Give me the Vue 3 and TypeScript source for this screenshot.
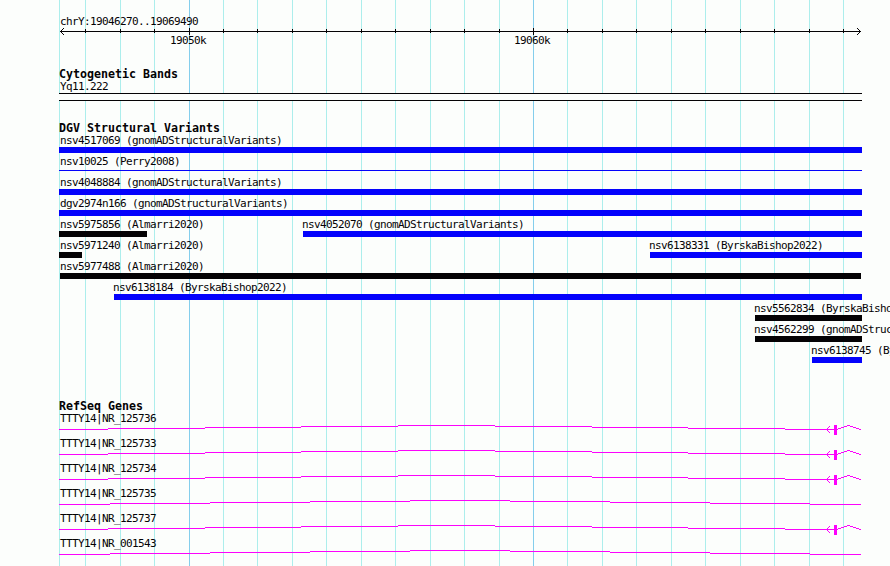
<script setup lang="ts">
interface Feature {
  name: string
  start: number
  end: number
  labelX: number
  color: 'blue' | 'black'
  thin?: boolean
}
interface Gene {
  name: string
  spliced: boolean
}
interface Segment {
  x: number
  w: number
  y: number
}

const gridLines: number[] = [
  59, 85, 120, 154, 189, 223, 257, 292, 326, 361, 395, 430,
  464, 499, 533, 567, 602, 636, 671, 705, 740, 774, 809, 843,
]
const major: Record<number, string> = { 189: '19050k', 533: '19060k' }
const ticks = gridLines.slice(1)

const f = (
  name: string, start: number, end: number, labelX: number,
  color: 'blue' | 'black' = 'blue', thin = false,
): Feature => ({ name, start, end, labelX, color, thin })

const variantRows: Feature[][] = [
  [f('nsv4517069 (gnomADStructuralVariants)', 59, 862, 60)],
  [f('nsv10025 (Perry2008)', 59, 862, 60, 'blue', true)],
  [f('nsv4048884 (gnomADStructuralVariants)', 59, 862, 60)],
  [f('dgv2974n166 (gnomADStructuralVariants)', 59, 862, 60)],
  [
    f('nsv5975856 (Almarri2020)', 59, 147, 60, 'black'),
    f('nsv4052070 (gnomADStructuralVariants)', 303, 862, 302),
  ],
  [
    f('nsv5971240 (Almarri2020)', 59, 82, 60, 'black'),
    f('nsv6138331 (ByrskaBishop2022)', 650, 862, 649),
  ],
  [f('nsv5977488 (Almarri2020)', 60, 861, 60, 'black')],
  [f('nsv6138184 (ByrskaBishop2022)', 114, 862, 113)],
  [f('nsv5562834 (ByrskaBishop2022)', 755, 862, 754, 'black')],
  [f('nsv4562299 (gnomADStructuralVariants)', 755, 862, 754, 'black')],
  [f('nsv6138745 (ByrskaBishop2022)', 812, 862, 811)],
]

const genes: Gene[] = [
  { name: 'TTTY14|NR_125736', spliced: true },
  { name: 'TTTY14|NR_125733', spliced: true },
  { name: 'TTTY14|NR_125734', spliced: true },
  { name: 'TTTY14|NR_125735', spliced: false },
  { name: 'TTTY14|NR_125737', spliced: true },
  { name: 'TTTY14|NR_001543', spliced: false },
]

// Introns rise one pixel per step to the middle and fall back again.
function steps(xs: number[], base: number): Segment[] {
  const n = xs.length - 1
  return xs.slice(0, -1).map((x, i) => ({ x, w: xs[i + 1] - x, y: base - Math.min(i, n - 1 - i) }))
}
const BASE = 17
const longIntron = steps([59, 110, 210, 310, 410, 510, 610, 710, 810, 861], BASE)
const splicedIntrons = [
  ...steps([59, 108, 205, 301, 398, 495, 592, 688, 785, 834], BASE),
  ...steps([837, 838, 841, 844, 847, 850, 853, 856, 859, 861], BASE),
]
</script>

<template>
  <main class="browser">
    <svg class="grid" width="890" height="566">
      <rect
        v-for="x in gridLines" :key="x" :x="x" y="0" width="1" height="566"
        :class="major[x] ? 'line-major' : 'line-minor'"
      />
    </svg>

    <svg class="ruler" width="890" height="68">
      <text x="60" y="25">chrY:19046270..19069490</text>
      <rect x="60" y="31" width="801" height="1" />
      <path class="arrow" d="M63.5 28v1M62.5 29v1M61.5 30v1M61.5 32v1M62.5 33v1M63.5 34v1" />
      <path class="arrow" d="M857.5 28v1M858.5 29v1M859.5 30v1M859.5 32v1M858.5 33v1M857.5 34v1" />
      <template v-for="x in ticks" :key="x">
        <rect :x="x" :y="major[x] ? 28 : 29" width="1" :height="major[x] ? 7 : 4" />
        <text v-if="major[x]" :x="x - 19" y="44">{{ major[x] }}</text>
      </template>
    </svg>

    <section class="track bands">
      <h2>Cytogenetic Bands</h2>
      <svg width="890" height="42">
        <text x="60" y="10">Yq11.222</text>
        <rect x="59" y="13" width="803" height="8" />
        <rect class="paper" x="59" y="14" width="803" height="6" />
      </svg>
    </section>

    <section class="track variants">
      <h2>DGV Structural Variants</h2>
      <svg v-for="(row, i) in variantRows" :key="i" width="890" height="21">
        <template v-for="v in row" :key="v.name">
          <rect
            :class="v.color" :x="v.start" :y="v.thin ? 15 : 13"
            :width="v.end - v.start" :height="v.thin ? 1 : 6"
          />
          <text :x="v.labelX" y="10">{{ v.name }}</text>
        </template>
      </svg>
    </section>

    <section class="track">
      <h2>RefSeq Genes</h2>
      <svg v-for="g in genes" :key="g.name" class="gene" width="890" height="25">
        <text x="60" y="10">{{ g.name }}</text>
        <rect
          v-for="s in g.spliced ? splicedIntrons : longIntron" :key="s.x"
          :x="s.x" :y="s.y" :width="s.w" height="1"
        />
        <template v-if="g.spliced">
          <rect x="834" y="13" width="3" height="10" />
          <path d="M829.5 14v1M828.5 15v1M827.5 16v3M828.5 19v1M829.5 20v1" />
        </template>
      </svg>
    </section>
  </main>
</template>

<style>
body {
  margin: 0;
  background: #fcfefc;
}
</style>

<style scoped>
.browser {
  position: relative;
  width: 890px;
  height: 566px;
  overflow: hidden;
  background: #fcfefc;
  color: #040204;
  font-family: "DejaVu Sans Mono", monospace;
}
svg {
  display: block;
  position: relative;
  overflow: visible;
  fill: #040204;
  shape-rendering: crispEdges;
}
.grid {
  position: absolute;
  top: 0;
  left: 0;
}
.line-minor {
  fill: #aceeec;
}
.line-major {
  fill: #84ceec;
}
text {
  font-size: 11px;
  letter-spacing: -0.622px;
  fill: #040204;
  white-space: pre;
}
.arrow {
  stroke: #040204;
  stroke-width: 1;
}
h2 {
  position: relative;
  margin: 0;
  padding-left: 59px;
  height: 12px;
  line-height: 13px;
  font-size: 11.63px;
  font-weight: bold;
  letter-spacing: 0;
}
.bands {
  height: 54px;
}
.variants {
  height: 278px;
}
.paper {
  fill: #fcfefc;
}
.blue {
  fill: #0402fc;
}
.black {
  fill: #040204;
}
.gene rect {
  fill: #fc02fc;
}
.gene path {
  stroke: #fc02fc;
  stroke-width: 1;
}
</style>
